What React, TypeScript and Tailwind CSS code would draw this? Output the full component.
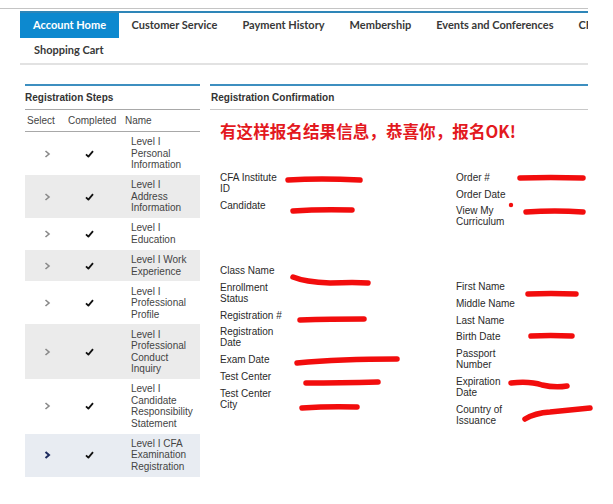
import React from "react";

const tabs = ["Account Home", "Customer Service", "Payment History", "Membership", "Events and Conferences", "CFA Program"];

const steps = [
  { name: "Level I Personal Information", bg: "bg-white" },
  { name: "Level I Address Information", bg: "bg-[#ebebeb]" },
  { name: "Level I Education", bg: "bg-white" },
  { name: "Level I Work Experience", bg: "bg-[#ebebeb]" },
  { name: "Level I Professional Profile", bg: "bg-white" },
  { name: "Level I Professional Conduct Inquiry", bg: "bg-[#ebebeb]" },
  { name: "Level I Candidate Responsibility Statement", bg: "bg-white" },
  { name: "Level I CFA Examination Registration", bg: "bg-[#e8ecf2]", active: true },
];

function Chevron({ active }: { active?: boolean }) {
  return (
    <svg width="7" height="8" viewBox="0 0 7 8">
      <path d="M1.5 1 L5 4 L1.5 7" fill="none" stroke={active ? "#1c2a5e" : "#8a8a8a"} strokeWidth={active ? 2 : 1.6} />
    </svg>
  );
}

function Check() {
  return (
    <svg width="9" height="8" viewBox="0 0 9 8">
      <path d="M1 4.3 L3.4 6.6 L8 1.2" fill="none" stroke="#111" strokeWidth="1.8" strokeLinejoin="round" />
    </svg>
  );
}

const leftA = ["CFA Institute ID", "Candidate"];
const rightA = ["Order #", "Order Date", "View My Curriculum"];
const leftB = ["Class Name", "Enrollment Status", "Registration #", "Registration Date", "Exam Date", "Test Center", "Test Center City"];
const rightB = ["First Name", "Middle Name", "Last Name", "Birth Date", "Passport Number", "Expiration Date", "Country of Issuance"];

function Labels({ items, w }: { items: string[]; w: string }) {
  return (
    <div className={`flex flex-col gap-[5.7px] ${w}`}>
      {items.map((t) => (
        <div key={t} className="leading-[11px]">{t}</div>
      ))}
    </div>
  );
}

const scribbles = [
  "M288 180 Q320 178 360 180",
  "M293 211 Q320 209 352 210",
  "M520 178 Q550 177 583 178",
  "M526 212 Q555 210 583 212",
  "M293 277 Q305 282 330 283 Q355 282 368 283",
  "M300 320 Q330 319 364 319",
  "M297 363 Q340 359 397 359",
  "M306 383 Q340 383 378 382",
  "M302 408 Q330 406 357 407",
  "M528 294 Q550 293 576 294",
  "M531 336 Q550 335 572 336",
  "M511 383 Q530 381 542 385 Q555 388 567 386",
  "M525 419 Q535 413 550 412 Q570 410 590 408",
];

export default function App() {
  return (
    <div className="relative w-[613px] h-[504px] bg-white overflow-hidden text-[#2a2a2a]" style={{ fontFamily: '"Liberation Sans", Arial, sans-serif' }}>
      <div className="pt-[8px]">
        <div className="h-px w-[588px] bg-[#c4c4c4]" />
        <div className="ml-[20px] w-[568px] mt-[2px] h-[2px] bg-[#2e86b8]" />
        <div className="ml-[20px] w-[568px] overflow-hidden" style={{ fontFamily: 'Lato, "Open Sans", sans-serif' }}>
          <div className="flex h-[25px] items-center whitespace-nowrap text-[11px] font-bold">
            {tabs.map((t, i) => (
              <div
                key={t}
                className={
                  i === 0
                    ? "h-full px-[13px] flex items-center bg-[#0d89cf] text-white"
                    : "h-full px-[12.5px] flex items-center text-[#383838]"
                }
              >
                {t}
              </div>
            ))}
          </div>
          <div className="h-[25px] flex items-center px-[14px] text-[11px] font-bold text-[#383838]">Shopping Cart</div>
        </div>
        <div className="ml-[20px] w-[568px] h-[2px] bg-[#e2e2e2]" />
      </div>

      <div className="flex mt-[19px] text-[10px]">
        {/* left panel */}
        <div className="ml-[25px] w-[175px]">
          <div className="h-[2px] bg-[#3d8fc0]" />
          <div className="h-[23px] flex items-center font-bold text-[#333]">Registration Steps</div>
          <div className="h-px bg-[#a8a8a8]" />
          <div className="grid grid-cols-[43px_57px_1fr] h-[21px] items-center text-[#444]">
            <div className="pl-[2px]">Select</div>
            <div>Completed</div>
            <div>Name</div>
          </div>
          <div className="h-px bg-[#a8a8a8]" />
          {steps.map((s) => (
            <div key={s.name} className={`grid grid-cols-[43px_57px_1fr] items-center ${s.bg}`}>
              <div className="flex justify-center pl-[2px]"><Chevron active={s.active} /></div>
              <div className="flex justify-center pr-[14px]"><Check /></div>
              <div className="pl-[6px] pr-[3px] py-[4.3px] leading-[11.5px] text-[#444]">{s.name}</div>
            </div>
          ))}
        </div>

        {/* right panel */}
        <div className="ml-[10px] w-[378px]">
          <div className="h-[2px] bg-[#3d8fc0]" />
          <div className="h-[23px] flex items-center pl-[1px] font-bold text-[#333]">Registration Confirmation</div>
          <div className="h-px bg-[#c8c8c8]" />
          <div className="pl-[10px]">
            <div
              className="mt-[11px] h-[20px] flex items-center text-[16.6px] font-bold text-[#e3191e] whitespace-nowrap"
              style={{ fontFamily: '"Noto Sans CJK SC", "Liberation Sans", sans-serif' }}
            >
              有这样报名结果信息，恭喜你，报名OK!
            </div>
            <div className="flex mt-[31px]">
              <div className="w-[236px]"><Labels items={leftA} w="w-[65px]" /></div>
              <Labels items={rightA} w="w-[64px]" />
            </div>
            <div className="flex mt-[38px]">
              <div className="w-[236px]"><Labels items={leftB} w="w-[65px]" /></div>
              <div className="pt-[16px]"><Labels items={rightB} w="w-[64px]" /></div>
            </div>
          </div>
        </div>
      </div>

      <svg className="absolute inset-0 pointer-events-none" width="613" height="504">
        {scribbles.map((d, i) => (
          <path key={i} d={d} fill="none" stroke="#f20d0d" strokeWidth="5.5" strokeLinecap="round" strokeLinejoin="round" />
        ))}
        <circle cx="511" cy="205" r="2.2" fill="#f20d0d" />
      </svg>
    </div>
  );
}
